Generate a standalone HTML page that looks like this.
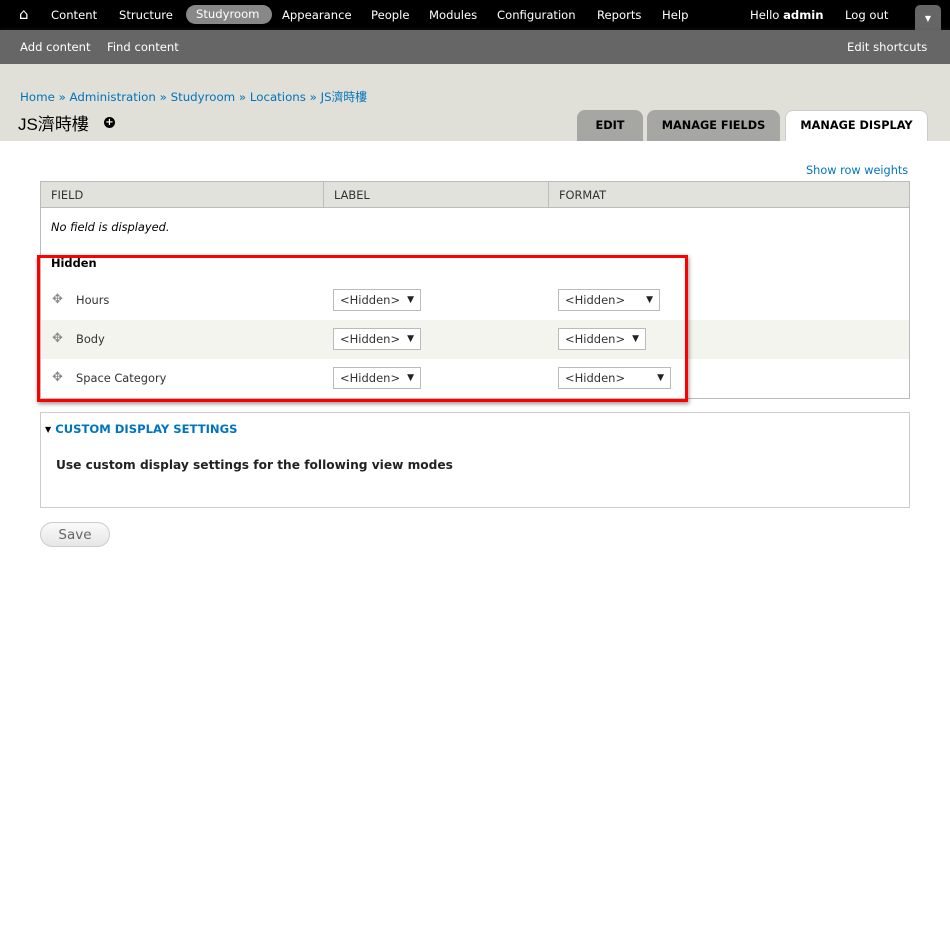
<!DOCTYPE html>
<html><head><meta charset="utf-8"><style>
*{margin:0;padding:0;box-sizing:border-box}
body{width:950px;height:934px;background:#fff;font-family:"DejaVu Sans","Liberation Sans","Noto Sans CJK TC",sans-serif;color:#333;position:relative;overflow:hidden}
.a{position:absolute;white-space:nowrap}
#top{left:0;top:0;width:950px;height:30px;background:#000}
#top span{position:absolute;top:8px;color:#fff;font-size:11.6px}
#sc{left:0;top:30px;width:950px;height:34px;background:#666;box-shadow:0 3px 6px #555}
#sc span{position:absolute;top:10px;color:#fff;font-size:11.6px}
#hd{left:0;top:64px;width:950px;height:77px;background:#e0e0d8}
.tab{position:absolute;top:110px;height:31px;border-radius:8px 8px 0 0;font-size:11.3px;font-weight:bold;color:#000;text-align:center;line-height:31px;background:#a6a7a2}
a,.lnk{color:#0074bd}
.sel{position:absolute;height:22px;border:1px solid #bbb;background:#fff;font-size:11.5px;padding:3px 0 0 6px;color:#333}
.sel i{position:absolute;right:6px;top:5px;font-style:normal;font-size:9px;color:#222}
.drag{position:absolute;left:52px;font-size:13px;color:#888}
.t{font-size:11.4px}
</style></head><body>
<div id="top" class="a">
<span style="left:19px;top:5px;font-size:15px">&#8962;</span>
<span style="left:51px">Content</span>
<span style="left:119px">Structure</span>
<span style="left:186px;top:5px;background:#888;border-radius:10px;height:19px;width:86px;padding:2px 0 0 10px">Studyroom</span>
<span style="left:282px">Appearance</span>
<span style="left:371px">People</span>
<span style="left:429px">Modules</span>
<span style="left:497px">Configuration</span>
<span style="left:597px">Reports</span>
<span style="left:662px">Help</span>
<span style="left:750px">Hello <b>admin</b></span>
<span style="left:845px">Log out</span>
<span style="left:915px;top:5px;width:26px;height:25px;background:#666;border-radius:5px 5px 0 0;text-align:center;font-size:8px;padding-top:9px">&#9660;</span>
</div>
<div id="sc" class="a">
<span style="left:20px">Add content</span>
<span style="left:107px">Find content</span>
<span style="left:847px">Edit shortcuts</span>
</div>
<div id="hd" class="a"></div>
<div class="a" style="left:20px;top:88px;font-size:11.8px;color:#0074bd">Home » Administration » Studyroom » Locations » JS濟時樓</div>
<div class="a" style="left:18px;top:110px;font-size:17px;color:#000;font-family:'Liberation Sans','Noto Sans CJK TC',sans-serif">JS濟時樓</div>
<div class="a" style="left:104px;top:117px;width:11px;height:11px;border-radius:50%;background:#000;color:#fff;font-size:10px;line-height:11px;text-align:center;font-weight:bold">+</div>
<div class="tab" style="left:577px;width:66px">EDIT</div>
<div class="tab" style="left:647px;width:133px">MANAGE FIELDS</div>
<div class="tab" style="left:785px;width:143px;background:#fff;border:1px solid #ccc;border-bottom:none;line-height:29px">MANAGE DISPLAY</div>
<div class="a lnk" style="left:806px;top:164px;font-size:11.3px">Show row weights</div>
<div class="a" style="left:40px;top:181px;width:870px;height:218px;border:1px solid #bbb"></div>
<div class="a" style="left:41px;top:182px;width:868px;height:26px;background:#e1e2dc;border-bottom:1px solid #bbb"></div>
<div class="a" style="left:323px;top:182px;width:1px;height:26px;background:#bbb"></div>
<div class="a" style="left:548px;top:182px;width:1px;height:26px;background:#bbb"></div>
<div class="a t" style="left:51px;top:188px">FIELD</div>
<div class="a t" style="left:334px;top:188px">LABEL</div>
<div class="a t" style="left:559px;top:188px">FORMAT</div>
<div class="a t" style="left:51px;top:220px;font-style:italic;color:#000">No field is displayed.</div>
<div class="a t" style="left:51px;top:256px;font-weight:bold;color:#000">Hidden</div>
<div class="a" style="left:41px;top:320px;width:868px;height:39px;background:#f3f4ee"></div>
<div class="drag" style="top:292px">✥</div><div class="a t" style="left:76px;top:293px">Hours</div>
<div class="drag" style="top:331px">✥</div><div class="a t" style="left:76px;top:332px">Body</div>
<div class="drag" style="top:370px">✥</div><div class="a t" style="left:76px;top:371px">Space Category</div>
<div class="sel" style="left:333px;top:289px;width:88px">&lt;Hidden&gt;<i>▼</i></div>
<div class="sel" style="left:333px;top:328px;width:88px">&lt;Hidden&gt;<i>▼</i></div>
<div class="sel" style="left:333px;top:367px;width:88px">&lt;Hidden&gt;<i>▼</i></div>
<div class="sel" style="left:558px;top:289px;width:102px">&lt;Hidden&gt;<i>▼</i></div>
<div class="sel" style="left:558px;top:328px;width:88px">&lt;Hidden&gt;<i>▼</i></div>
<div class="sel" style="left:558px;top:367px;width:113px">&lt;Hidden&gt;<i>▼</i></div>
<div class="a" style="left:37px;top:255px;width:651px;height:147px;border:3px solid #f00;box-shadow:1px 2px 4px rgba(0,0,0,.4)"></div>
<div class="a" style="left:40px;top:412px;width:870px;height:96px;border:1px solid #ccc"></div>
<div class="a lnk" style="left:45px;top:422px;font-size:11.6px;font-weight:bold"><span style="font-size:8px;color:#000;vertical-align:1px">▼</span> CUSTOM DISPLAY SETTINGS</div>
<div class="a" style="left:56px;top:458px;font-size:12.2px;font-weight:bold;color:#222">Use custom display settings for the following view modes</div>
<div class="a" style="left:40px;top:522px;width:70px;height:25px;border:1px solid #ccc;border-radius:13px;background:linear-gradient(#fafafa,#e6e6e6);font-size:13.5px;color:#666;text-align:center;line-height:25px">Save</div>
</body></html>
